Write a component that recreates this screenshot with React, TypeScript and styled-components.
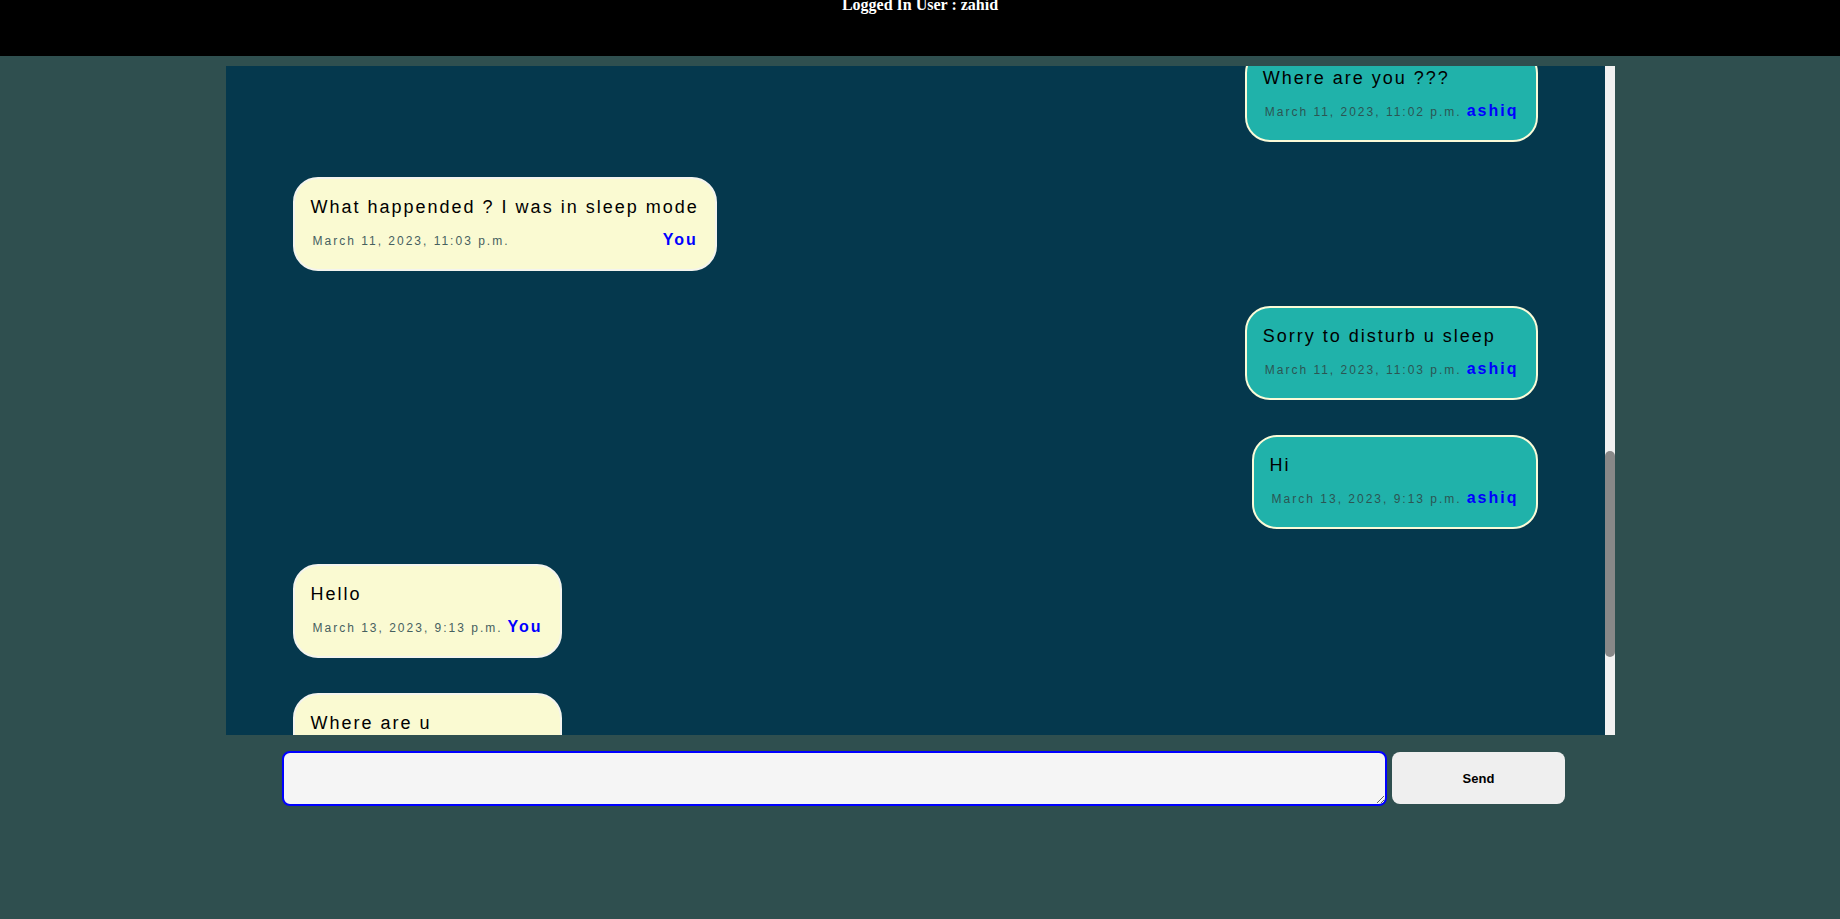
import React, { useLayoutEffect, useRef, useState } from "react";
import styled, { createGlobalStyle } from "styled-components";

const GlobalStyle = createGlobalStyle`
  html, body {
    margin: 0;
    padding: 0;
    background-color: #2f4f4f;
    min-height: 100vh;
  }
  * {
    box-sizing: border-box;
  }
`;

const Page = styled.div`
  width: 100%;
  min-height: 100vh;
  background-color: #2f4f4f;
`;

const Header = styled.header`
  height: 56px;
  background-color: #000;
  display: flex;
  justify-content: center;
  align-items: flex-start;
  overflow: hidden;
`;

const Title = styled.h4`
  margin: -4px 0 0;
  font-family: "Liberation Serif", "Times New Roman", serif;
  font-weight: 700;
  font-size: 16px;
  line-height: 18px;
  color: #fff;
`;

const ChatFrame = styled.div`
  display: flex;
  width: 1389px;
  height: 669px;
  margin: 10px auto 0;
  background-color: #05384d;
`;

const ChatBox = styled.div`
  flex: 1;
  height: 100%;
  overflow-y: auto;
  overflow-x: hidden;
  scrollbar-width: none;
  &::-webkit-scrollbar {
    display: none;
  }
`;

const Track = styled.div`
  width: 10px;
  height: 100%;
  background: #f1f1f1;
`;

const Thumb = styled.div`
  width: 10px;
  background: #888;
  border-radius: 5px;
`;

const MessageList = styled.div`
  display: flex;
  flex-direction: column;
  gap: 35px;
  padding: 71px 67px 73px 67px;
`;

const Bubble = styled.div<{ $mine: boolean }>`
  align-self: ${({ $mine }) => ($mine ? "flex-start" : "flex-end")};
  padding: 17px 16px 20px;
  border-radius: 25px;
  border: 2px solid ${({ $mine }) => ($mine ? "#f4f4ee" : "#fbfbd8")};
  background-color: ${({ $mine }) => ($mine ? "#fafad2" : "#20b2aa")};
  font-family: "Liberation Sans", Arial, sans-serif;
  letter-spacing: 2px;
`;

const Text = styled.div`
  font-size: 18px;
  line-height: 22px;
  color: #000;
  white-space: nowrap;
`;

const Meta = styled.div`
  display: flex;
  align-items: baseline;
  justify-content: space-between;
  gap: 5px;
  margin-top: 13px;
  padding: 0 1px 0 2px;
  white-space: nowrap;
`;

const Stamp = styled.span<{ $mine: boolean }>`
  font-size: 12px;
  color: ${({ $mine }) => ($mine ? "#46605f" : "#2c5553")};
`;

const Sender = styled.span`
  font-size: 16px;
  line-height: 18px;
  font-weight: 700;
  color: #0000ff;
`;

const Composer = styled.form`
  display: flex;
  align-items: center;
  gap: 5px;
  margin: 16px 0 0 282px;
`;

const Input = styled.textarea`
  width: 1105px;
  height: 55px;
  border: 2px solid #0000ff;
  border-radius: 8px;
  background-color: #f5f5f5;
  outline: none;
  padding: 4px 8px;
  font-family: "Liberation Sans", Arial, sans-serif;
  font-size: 14px;
`;

const SendButton = styled.button`
  width: 173px;
  height: 52px;
  margin-top: -1px;
  border: none;
  border-radius: 8px;
  background-color: #efefef;
  color: #000;
  font-family: "Liberation Sans", Arial, sans-serif;
  font-size: 13px;
  font-weight: 700;
  cursor: pointer;
`;

type Message = { text: string; user: string; time: string };

const ME = "zahid";

const messages: Message[] = [
  { text: "Hey zahid", user: "ashiq", time: "March 10, 2023, 8:40 p.m." },
  { text: "Hi ashiq", user: "zahid", time: "March 10, 2023, 8:41 p.m." },
  { text: "How are you ?", user: "ashiq", time: "March 10, 2023, 8:41 p.m." },
  { text: "I am fine, what about you ?", user: "zahid", time: "March 10, 2023, 8:42 p.m." },
  { text: "Good", user: "ashiq", time: "March 10, 2023, 8:43 p.m." },
  { text: "Are you coming tomorrow ?", user: "ashiq", time: "March 11, 2023, 10:50 p.m." },
  { text: "Hello ?", user: "ashiq", time: "March 11, 2023, 10:58 p.m." },
  { text: "zahid", user: "ashiq", time: "March 11, 2023, 11:00 p.m." },
  { text: "Reply please", user: "ashiq", time: "March 11, 2023, 11:01 p.m." },
  { text: "Where are you ???", user: "ashiq", time: "March 11, 2023, 11:02 p.m." },
  { text: "What happended ? I was in sleep mode", user: "zahid", time: "March 11, 2023, 11:03 p.m." },
  { text: "Sorry to disturb u sleep", user: "ashiq", time: "March 11, 2023, 11:03 p.m." },
  { text: "Hi", user: "ashiq", time: "March 13, 2023, 9:13 p.m." },
  { text: "Hello", user: "zahid", time: "March 13, 2023, 9:13 p.m." },
  { text: "Where are u", user: "zahid", time: "March 13, 2023, 9:14 p.m." },
  { text: "Reply me", user: "zahid", time: "March 13, 2023, 9:20 p.m." },
];

export default function App() {
  const boxRef = useRef<HTMLDivElement>(null);
  const [thumb, setThumb] = useState({ top: 385, height: 206 });

  const updateThumb = () => {
    const el = boxRef.current;
    if (!el) return;
    const track = el.clientHeight;
    setThumb({
      top: (el.scrollTop / el.scrollHeight) * track,
      height: (el.clientHeight / el.scrollHeight) * track,
    });
  };

  useLayoutEffect(() => {
    if (boxRef.current) boxRef.current.scrollTop = 1250;
    updateThumb();
  }, []);

  return (
    <Page>
      <GlobalStyle />
      <Header>
        <Title>Logged In User : {ME}</Title>
      </Header>
      <ChatFrame>
        <ChatBox ref={boxRef} onScroll={updateThumb}>
          <MessageList>
            {messages.map((m, i) => {
              const mine = m.user === ME;
              return (
                <Bubble key={i} $mine={mine}>
                  <Text>{m.text}</Text>
                  <Meta>
                    <Stamp $mine={mine}>{m.time}</Stamp>
                    <Sender>{mine ? "You" : m.user}</Sender>
                  </Meta>
                </Bubble>
              );
            })}
          </MessageList>
        </ChatBox>
        <Track>
          <Thumb style={{ marginTop: thumb.top, height: thumb.height }} />
        </Track>
      </ChatFrame>
      <Composer onSubmit={(e) => e.preventDefault()}>
        <Input />
        <SendButton type="submit">Send</SendButton>
      </Composer>
    </Page>
  );
}
